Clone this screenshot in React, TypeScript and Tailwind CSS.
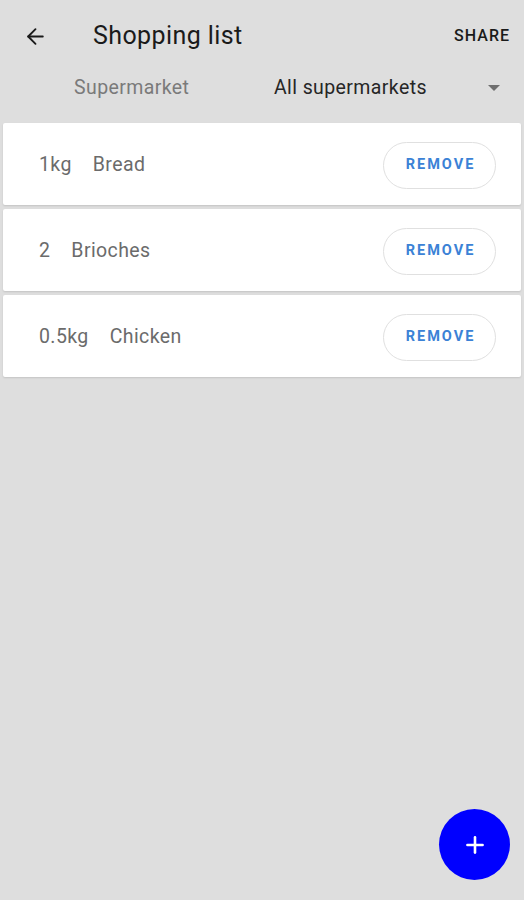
import { ArrowLeft, Plus } from "lucide-react";

const items = [
  { qty: "1kg", name: "Bread" },
  { qty: "2", name: "Brioches" },
  { qty: "0.5kg", name: "Chicken" },
];

export default function App() {
  return (
    <div className="relative h-[900px] w-[524px] overflow-hidden bg-[#dedede] font-['Roboto',sans-serif]">
      {/* Toolbar */}
      <div className="flex h-[72px] items-center pl-[23px] pr-[14px]">
        <ArrowLeft size={25} strokeWidth={1.8} className="text-[#1a1a1a]" />
        <h1 className="ml-[45px] text-[25px] tracking-[0.4px] text-[#1a1a1a]">Shopping list</h1>
        <span className="ml-auto text-[16px] font-medium tracking-[1px] text-[#1a1a1a]">SHARE</span>
      </div>

      {/* Supermarket filter */}
      <div className="flex h-[32px] items-center pl-[74px] pr-[24px]">
        <span className="w-[200px] text-[19.5px] tracking-[0.4px] text-[#7a7a7a]">Supermarket</span>
        <span className="text-[19.5px] tracking-[0.4px] text-[#262626]">All supermarkets</span>
        <svg width="12" height="6" viewBox="0 0 12 6" className="ml-auto">
          <path d="M0 0h12L6 6z" fill="#6e6e6e" />
        </svg>
      </div>

      {/* Items */}
      <div className="mt-[19px] flex flex-col gap-[4px] px-[3px]">
        {items.map((item) => (
          <div
            key={item.name}
            className="flex h-[82px] items-center rounded-[2px] bg-white pl-[36px] pr-[25px] pt-[2px] shadow-[0_1px_2px_rgba(0,0,0,0.12)]"
          >
            <span className="text-[19.5px] tracking-[0.4px] text-[#6b6b6b]">{item.qty}</span>
            <span className="ml-[21px] text-[19.5px] tracking-[0.4px] text-[#6b6b6b]">{item.name}</span>
            <button className="ml-auto flex h-[47px] w-[113px] items-center justify-center rounded-full border border-[#e0e0e0] pl-[2px] text-[14.5px] font-bold tracking-[2px] text-[#3b82d6]">
              REMOVE
            </button>
          </div>
        ))}
      </div>

      {/* FAB */}
      <button className="absolute left-[439px] top-[809px] flex h-[71px] w-[71px] items-center justify-center rounded-full bg-[#0000ff]">
        <Plus size={26} strokeWidth={2.4} className="text-white" />
      </button>
    </div>
  );
}
